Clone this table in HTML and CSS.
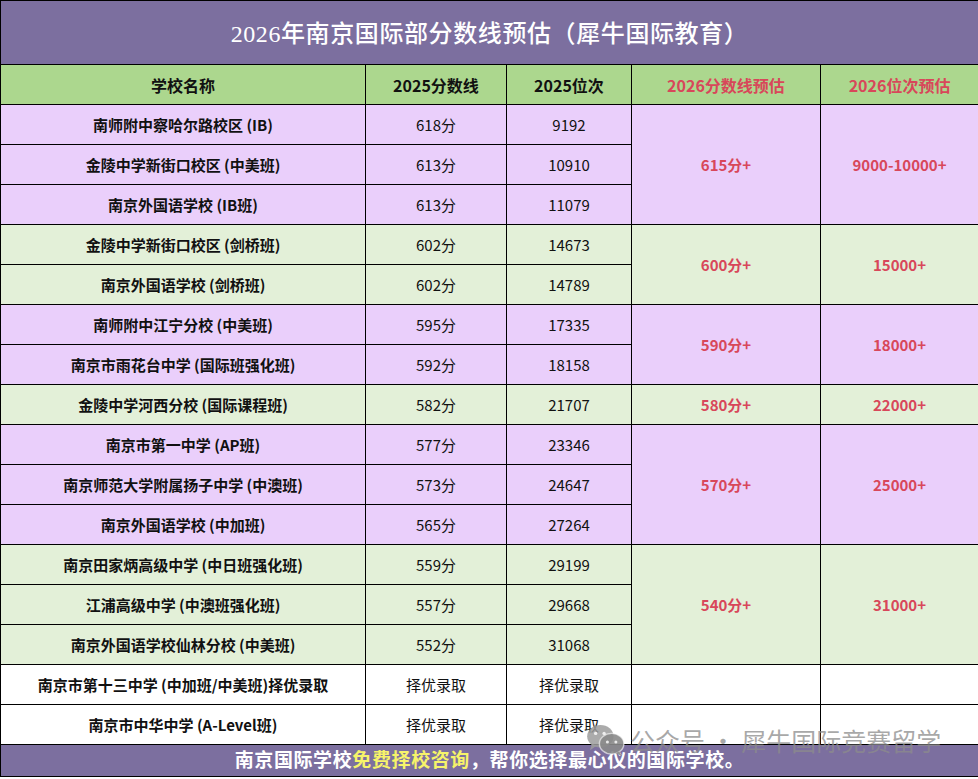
FILE: index.html
```html
<!DOCTYPE html>
<html lang="zh-CN">
<head>
<meta charset="utf-8">
<title>2026年南京国际部分数线预估</title>
<link rel="stylesheet" href="styles.css">
</head>
<body>
<div class="wrap">
<table class="sheet">
  <colgroup>
    <col class="c1"><col class="c2"><col class="c3"><col class="c4"><col class="c5">
  </colgroup>
  <thead>
    <tr class="title-row"><th colspan="5" class="title">2026年南京国际部分数线预估（犀牛国际教育）</th></tr>
    <tr class="head-row">
      <th>学校名称</th><th>2025分数线</th><th>2025位次</th><th class="red">2026分数线预估</th><th class="red">2026位次预估</th>
    </tr>
  </thead>
  <tbody>
    <tr class="lav"><td class="name">南师附中察哈尔路校区 (IB)</td><td>618分</td><td>9192</td><td rowspan="3" class="est">615分+</td><td rowspan="3" class="est">9000-10000+</td></tr>
    <tr class="lav"><td class="name">金陵中学新街口校区 (中美班)</td><td>613分</td><td>10910</td></tr>
    <tr class="lav"><td class="name">南京外国语学校 (IB班)</td><td>613分</td><td>11079</td></tr>
    <tr class="grn"><td class="name">金陵中学新街口校区 (剑桥班)</td><td>602分</td><td>14673</td><td rowspan="2" class="est">600分+</td><td rowspan="2" class="est">15000+</td></tr>
    <tr class="grn"><td class="name">南京外国语学校 (剑桥班)</td><td>602分</td><td>14789</td></tr>
    <tr class="lav"><td class="name">南师附中江宁分校 (中美班)</td><td>595分</td><td>17335</td><td rowspan="2" class="est">590分+</td><td rowspan="2" class="est">18000+</td></tr>
    <tr class="lav"><td class="name">南京市雨花台中学 (国际班强化班)</td><td>592分</td><td>18158</td></tr>
    <tr class="grn"><td class="name">金陵中学河西分校 (国际课程班)</td><td>582分</td><td>21707</td><td class="est">580分+</td><td class="est">22000+</td></tr>
    <tr class="lav"><td class="name">南京市第一中学 (AP班)</td><td>577分</td><td>23346</td><td rowspan="3" class="est">570分+</td><td rowspan="3" class="est">25000+</td></tr>
    <tr class="lav"><td class="name">南京师范大学附属扬子中学 (中澳班)</td><td>573分</td><td>24647</td></tr>
    <tr class="lav"><td class="name">南京外国语学校 (中加班)</td><td>565分</td><td>27264</td></tr>
    <tr class="grn"><td class="name">南京田家炳高级中学 (中日班强化班)</td><td>559分</td><td>29199</td><td rowspan="3" class="est">540分+</td><td rowspan="3" class="est">31000+</td></tr>
    <tr class="grn"><td class="name">江浦高级中学 (中澳班强化班)</td><td>557分</td><td>29668</td></tr>
    <tr class="grn"><td class="name">南京外国语学校仙林分校 (中美班)</td><td>552分</td><td>31068</td></tr>
    <tr class="wht"><td class="name">南京市第十三中学 (中加班/中美班)择优录取</td><td>择优录取</td><td>择优录取</td><td></td><td></td></tr>
    <tr class="wht"><td class="name">南京市中华中学 (A-Level班)</td><td>择优录取</td><td>择优录取</td><td></td><td></td></tr>
  </tbody>
  <tfoot>
    <tr class="foot-row"><td colspan="5" class="foot">南京国际学校<span class="hl">免费择校咨询</span>，帮你选择最心仪的国际学校。</td></tr>
  </tfoot>
</table>
<div class="watermark">
  <svg class="wm-icon" width="40" height="32" viewBox="0 0 42 34">
    <ellipse cx="15" cy="13" rx="14" ry="12" fill="#9c9c9c" fill-opacity="0.85"/>
    <path d="M6 21 L4 28 L11 23 Z" fill="#9c9c9c" fill-opacity="0.85"/>
    <ellipse cx="27" cy="21" rx="13" ry="11" fill="#8a8a8a" fill-opacity="0.9" stroke="#ffffff" stroke-opacity="0.6" stroke-width="1.5"/>
    <path d="M35 29 L38 34 L31 31 Z" fill="#8a8a8a" fill-opacity="0.9"/>
    <circle cx="10" cy="10" r="1.8" fill="#fff" fill-opacity="0.8"/>
    <circle cx="19" cy="10" r="1.8" fill="#fff" fill-opacity="0.8"/>
    <circle cx="22.5" cy="19" r="1.6" fill="#fff" fill-opacity="0.8"/>
    <circle cx="31.5" cy="19" r="1.6" fill="#fff" fill-opacity="0.8"/>
  </svg>
  <span class="wm-text">公众号 · 犀牛国际竞赛留学</span>
</div>
</div>
</body>
</html>
```

FILE: styles.css
```css
html, body {
  margin: 0;
  padding: 0;
  background: #ffffff;
}

.wrap {
  position: relative;
  width: 978px;
}

.sheet {
  border-collapse: collapse;
  table-layout: fixed;
  width: 978px;
  font-family: "Noto Sans CJK SC", "Liberation Sans", sans-serif;
  color: #111111;
}

.c1 { width: 365px; }
.c2 { width: 141px; }
.c3 { width: 125px; }
.c4 { width: 189px; }
.c5 { width: 158px; }

.sheet th,
.sheet td {
  border: 1px solid #000000;
  text-align: center;
  vertical-align: middle;
  padding: 0;
  font-size: 15px;
  line-height: 20px;
}

.title-row { height: 64px; }
.sheet th.title {
  background: #7c6f9f;
  color: #ffffff;
  font-family: "Liberation Serif", "Noto Sans CJK SC", serif;
  font-weight: 500;
  font-size: 24px;
  line-height: 30px;
  letter-spacing: 0.6px;
  padding-top: 2px;
}

.head-row { height: 40px; }
.sheet .head-row th {
  background: #acd78e;
  font-weight: 700;
  font-size: 16px;
}
.sheet .head-row th.red { color: #d8475a; }

.sheet tbody tr { height: 40px; }

.lav td { background: #eacffb; }
.grn td { background: #e3f0d8; }
.wht td { background: #ffffff; }

td.name { font-weight: 700; }

td.est {
  color: #d8475a;
  font-weight: 700;
}

.foot-row { height: 32px; }
.sheet td.foot {
  background: #7c6f9f;
  color: #ffffff;
  font-family: "Liberation Serif", "Noto Sans CJK SC", serif;
  font-weight: 700;
  font-size: 19px;
  line-height: 24px;
  letter-spacing: 0.6px;
}
.hl { color: #f6f36a; }

.watermark {
  position: absolute;
  left: 586px;
  top: 723px;
  display: flex;
  align-items: center;
  gap: 4px;
  pointer-events: none;
}
.wm-text {
  font-family: "Noto Sans CJK SC", sans-serif;
  font-size: 25px;
  line-height: 34px;
  color: rgba(140, 140, 140, 0.75);
  letter-spacing: 0;
  white-space: nowrap;
}
```
